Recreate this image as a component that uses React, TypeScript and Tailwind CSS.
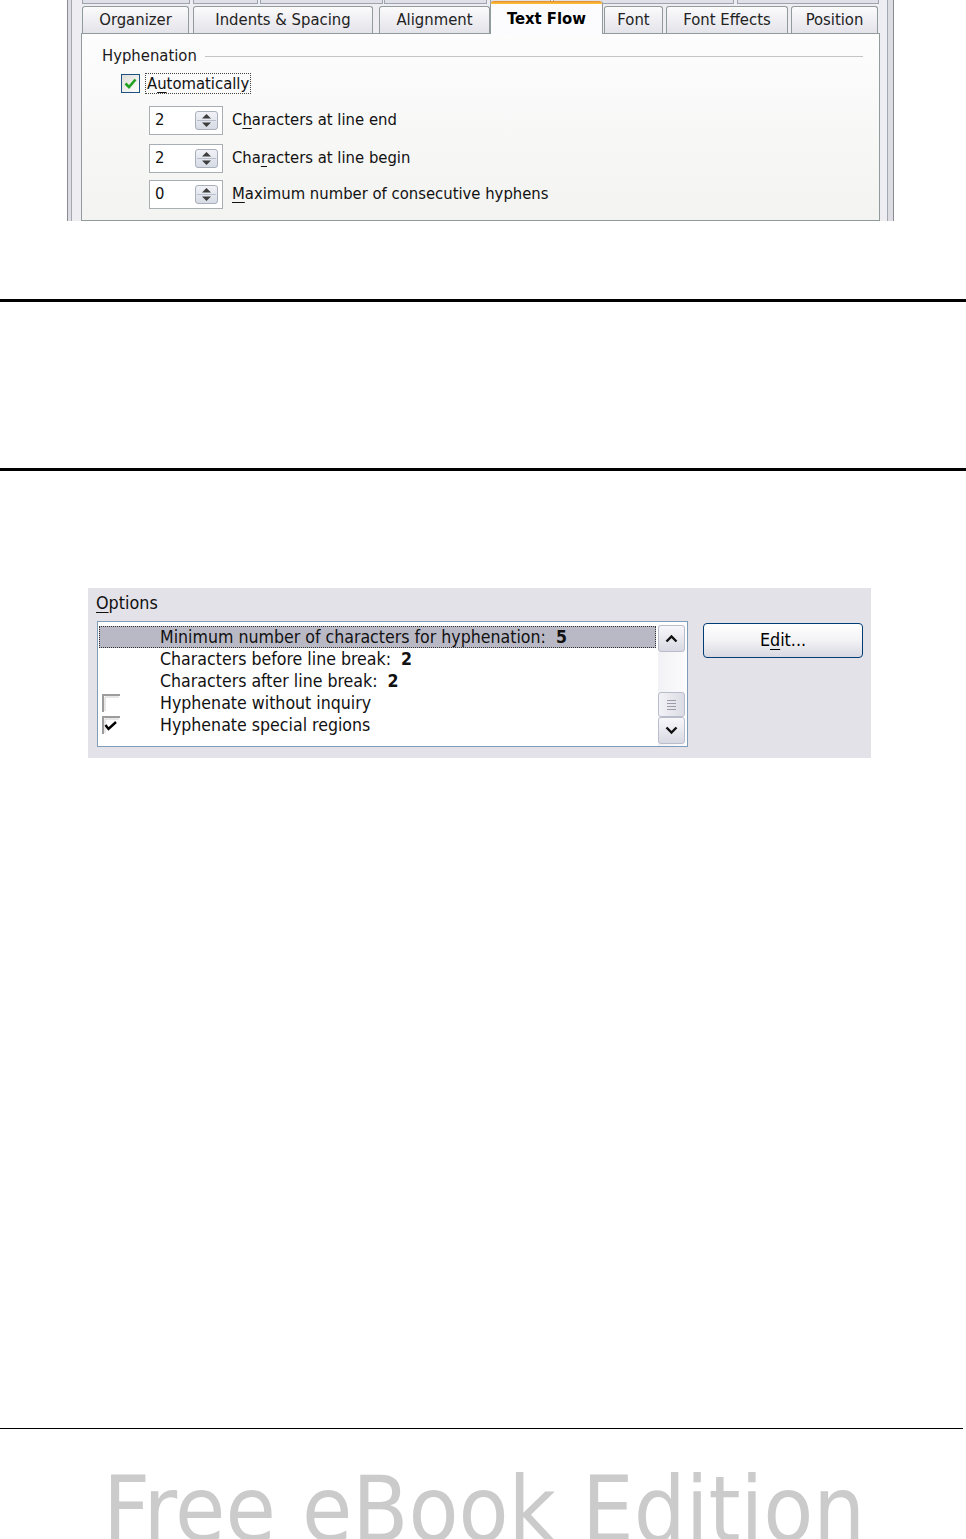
import React from 'react';

const ui = { fontFamily: '"DejaVu Sans Condensed", "DejaVu Sans", sans-serif' };

function U({ children }: { children: React.ReactNode }) {
  return <span className="underline underline-offset-[3px] decoration-1">{children}</span>;
}

function SpinButton() {
  return (
    <svg width="23" height="19" viewBox="0 0 23 19">
      <defs>
        <linearGradient id="sb" x1="0" y1="0" x2="0" y2="1">
          <stop offset="0" stopColor="#f1f3f8" />
          <stop offset="1" stopColor="#d5dae4" />
        </linearGradient>
      </defs>
      <rect x="0.5" y="0.5" width="22" height="18" rx="2.5" fill="url(#sb)" stroke="#a9afbb" />
      <line x1="2" y1="9.5" x2="21" y2="9.5" stroke="#b8beca" />
      <path d="M7 7.5 L11.5 3 L16 7.5 Z" fill="#3d3d3d" />
      <path d="M7 11.5 L11.5 16 L16 11.5 Z" fill="#3d3d3d" />
    </svg>
  );
}

function SpinRow({ value, label, mt }: { value: string; label: React.ReactNode; mt: string }) {
  return (
    <div className={`flex items-center ${mt} ml-[47px]`}>
      <div className="w-[74px] h-[29px] border border-[#a8aeb4] bg-white flex items-center pl-[5px] pr-[4px]">
        <span className="flex-1 text-[16.5px] leading-none">{value}</span>
        <SpinButton />
      </div>
      <span className="ml-[9px] text-[16.5px] leading-none">{label}</span>
    </div>
  );
}

// tabs of the back row, only their lower edge shows
const backTabs = [
  { w: 'w-[108px]', ml: 'ml-[10px]' },
  { w: 'w-[65px]', ml: 'ml-[3px]' },
  { w: 'w-[123px]', ml: 'ml-[2px]' },
  { w: 'w-[103px]', ml: 'ml-[1px]' },
  { w: 'w-[61px]', ml: 'ml-[3px]' },
  { w: 'w-[181px]', ml: 'ml-[2px]' },
  { w: 'w-[142px]', ml: 'ml-[3px]' },
];

const tabs = [
  { label: 'Organizer', w: 'w-[107px]', ml: 'ml-[10px]' },
  { label: 'Indents & Spacing', w: 'w-[180px]', ml: 'ml-[4px]' },
  { label: 'Alignment', w: 'w-[111px]', ml: 'ml-[6px]' },
  { label: 'Text Flow', w: 'w-[113px]', ml: 'ml-0', active: true },
  { label: 'Font', w: 'w-[59px]', ml: 'ml-[1px]' },
  { label: 'Font Effects', w: 'w-[122px]', ml: 'ml-[3px]' },
  { label: 'Position', w: 'w-[87px]', ml: 'ml-[3px]' },
];

function XpCheck() {
  return (
    <svg width="19" height="19" viewBox="0 0 19 19">
      <defs>
        <linearGradient id="cb" x1="0" y1="0" x2="1" y2="1">
          <stop offset="0" stopColor="#dcdcd7" />
          <stop offset="1" stopColor="#ffffff" />
        </linearGradient>
      </defs>
      <rect x="0.5" y="0.5" width="18" height="18" fill="url(#cb)" stroke="#1c5180" />
      <path d="M4.5 9.5 L8 13 L14.5 5.5" fill="none" stroke="#21a121" strokeWidth="2.6" />
    </svg>
  );
}

function FlatCheck({ checked }: { checked?: boolean }) {
  return (
    <svg width="19" height="19" viewBox="0 0 19 19">
      <path d="M1 18 V1 H18" fill="none" stroke="#9c9c9c" strokeWidth="2" />
      <path d="M3 17 V3 H17" fill="none" stroke="#d0d0d0" strokeWidth="1" />
      {checked && <path d="M3.5 9 L6.5 13 L14 6" fill="none" stroke="#000" strokeWidth="2.4" />}
    </svg>
  );
}

function ScrollBtn({ up }: { up?: boolean }) {
  return (
    <div className="w-[27px] h-[27px] rounded-[3px] border border-[#b9bccb] bg-gradient-to-b from-[#f8f8fb] to-[#d9d9e3] flex items-center justify-center">
      <svg width="13" height="9" viewBox="0 0 13 9">
        <path d={up ? 'M1.5 7.5 L6.5 2.5 L11.5 7.5' : 'M1.5 1.5 L6.5 6.5 L11.5 1.5'} fill="none" stroke="#111" strokeWidth="2.4" />
      </svg>
    </div>
  );
}

const options = [
  { text: 'Minimum number of characters for hyphenation:', val: '5', selected: true },
  { text: 'Characters before line break:', val: '2' },
  { text: 'Characters after line break:', val: '2' },
  { text: 'Hyphenate without inquiry', box: 'off' },
  { text: 'Hyphenate special regions', box: 'on' },
];

export default function App() {
  return (
    <div className="w-[966px] h-[1539px] overflow-hidden bg-white text-[#111]" style={ui}>
      {/* dialog screenshot */}
      <div className="ml-[67px] w-[827px] h-[221px] overflow-hidden flex border-l border-r border-[#888c94] bg-[#dcdce2]">
        <div className="flex-1 ml-[3px] mr-[5px] border-l border-r border-[#a4a8b0] bg-[#eeedf2] flex flex-col">
          <div className="flex h-[5px]">
            {backTabs.map((t, i) => (
              <div key={i} className={`${t.ml} ${t.w} h-[4px] border-x border-b border-[#9ea4ae] bg-[#dfe0e8]`} />
            ))}
          </div>
          <div className="flex items-end h-[28px] relative z-10">
            {tabs.map((t) =>
              t.active ? (
                <div
                  key={t.label}
                  className={`${t.ml} ${t.w} h-[33px] -mt-[5px] -mb-px rounded-t-[3px] border-x border-[#919b9c] bg-[#fcfcfe] flex flex-col`}
                >
                  <div className="h-[3px] rounded-t-[3px] bg-gradient-to-b from-[#e68b2c] to-[#ffc73c]" />
                  <div className="flex-1 flex items-center justify-center text-[16.5px] font-bold text-black">{t.label}</div>
                </div>
              ) : (
                <div
                  key={t.label}
                  className={`${t.ml} ${t.w} h-[27px] rounded-t-[3px] border-x border-t border-[#919b9c] bg-gradient-to-b from-[#fbfbfc] to-[#e3e3ea] flex items-center justify-center text-[16.5px] text-[#222]`}
                >
                  {t.label}
                </div>
              ),
            )}
          </div>
          <div className="ml-[9px] mr-[7px] flex-1 border border-[#919b9c] bg-gradient-to-b from-[#fdfdfe] to-[#f3f3f1] pl-[20px] pr-[16px]">
            <div className="mt-[12px] h-[20px] flex items-center text-[16.5px] text-[#1a1a1a]">
              <span>Hyphenation</span>
              <div className="flex-1 ml-[8px] h-px bg-[#c4c4c4]" />
            </div>
            <div className="mt-[7px] ml-[19px] flex items-center">
              <XpCheck />
              <span className="ml-[5px] border border-dotted border-[#444] px-px text-[16.5px] leading-[19px]">
                A<U>u</U>tomatically
              </span>
            </div>
            <SpinRow
              value="2"
              mt="mt-[12px]"
              label={
                <>
                  C<U>h</U>aracters at line end
                </>
              }
            />
            <SpinRow
              value="2"
              mt="mt-[9px]"
              label={
                <>
                  Cha<U>r</U>acters at line begin
                </>
              }
            />
            <SpinRow
              value="0"
              mt="mt-[7px]"
              label={
                <>
                  <U>M</U>aximum number of consecutive hyphens
                </>
              }
            />
          </div>
        </div>
      </div>

      <div className="mt-[78px] h-[3px] bg-black" />
      <div className="mt-[166px] h-[3px] bg-black" />

      {/* options screenshot */}
      <div className="mt-[117px] ml-[88px] w-[783px] h-[170px] bg-[#e3e2e8] pl-[8px] pt-[5px]">
        <div className="h-[20px] flex items-center text-[17.8px] text-[#111]">
          <U>O</U>ptions
        </div>
        <div className="mt-[8px] flex items-start">
          <div className="ml-px w-[591px] h-[126px] border border-[#7f9db9] bg-white flex pt-[3px] pl-px pr-[2px]">
            <div className="flex-1 flex flex-col pt-px">
              {options.map((o) => (
                <div
                  key={o.text}
                  className={
                    o.selected
                      ? 'h-[22px] flex items-center border border-dotted border-[#333] bg-[#b9b9c6] text-[17.6px]'
                      : 'h-[22px] flex items-center border border-transparent text-[17.6px]'
                  }
                >
                  <div className="w-[60px] pl-[2px] flex items-center">
                    {o.box === 'off' && <FlatCheck />}
                    {o.box === 'on' && <FlatCheck checked />}
                  </div>
                  <span>{o.text}</span>
                  {o.val && <span className="ml-[10px] font-bold">{o.val}</span>}
                </div>
              ))}
            </div>
            <div className="ml-[2px] w-[27px] flex flex-col bg-gradient-to-r from-[#f2f2f6] to-[#fbfbfd]">
              <ScrollBtn up />
              <div className="flex-1" />
              <div className="h-[25px] rounded-[3px] border border-[#b9bccb] bg-gradient-to-r from-[#f2f2f6] to-[#dcdce5] flex flex-col items-center justify-center gap-[2px]">
                <div className="w-[9px] h-px bg-[#9a9aa8]" />
                <div className="w-[9px] h-px bg-[#9a9aa8]" />
                <div className="w-[9px] h-px bg-[#9a9aa8]" />
                <div className="w-[9px] h-px bg-[#9a9aa8]" />
              </div>
              <ScrollBtn />
              <div className="h-[2px]" />
            </div>
          </div>
          <div className="ml-[15px] mt-[2px] w-[160px] h-[35px] rounded-[4px] border border-[#003c74] bg-gradient-to-b from-[#ffffff] via-[#f3f3f6] to-[#d8d8e2] flex items-center justify-center text-[17.8px] text-black">
            E<U>d</U>it...
          </div>
        </div>
      </div>

      <div className="mt-[670px] w-[963px] h-px bg-black" />
      <div className="mt-[35px] pl-[103px] text-[91px] leading-none text-[#cbcbcb] whitespace-nowrap">
        Free eBook Edition
      </div>
    </div>
  );
}
